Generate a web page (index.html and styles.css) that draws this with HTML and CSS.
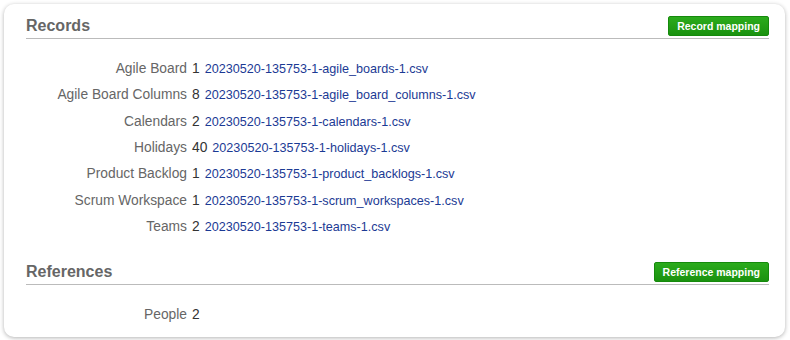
FILE: index.html
```html
<!DOCTYPE html>
<html lang="en">
<head>
  <meta charset="UTF-8">
  <meta name="viewport" content="width=device-width, initial-scale=1.0">
  <title>Import summary</title>
  <link rel="stylesheet" href="styles.css">
</head>
<body>
  <div class="card">
    <div class="section-header">
      <h2>Records</h2>
      <button class="btn-green">Record mapping</button>
    </div>
    <div class="list">
      <div class="item">
        <span class="label">Agile Board</span>
        <span class="count">1</span>
        <a href="#">20230520-135753-1-agile_boards-1.csv</a>
      </div>
      <div class="item">
        <span class="label">Agile Board Columns</span>
        <span class="count">8</span>
        <a href="#">20230520-135753-1-agile_board_columns-1.csv</a>
      </div>
      <div class="item">
        <span class="label">Calendars</span>
        <span class="count">2</span>
        <a href="#">20230520-135753-1-calendars-1.csv</a>
      </div>
      <div class="item">
        <span class="label">Holidays</span>
        <span class="count">40</span>
        <a href="#">20230520-135753-1-holidays-1.csv</a>
      </div>
      <div class="item">
        <span class="label">Product Backlog</span>
        <span class="count">1</span>
        <a href="#">20230520-135753-1-product_backlogs-1.csv</a>
      </div>
      <div class="item">
        <span class="label">Scrum Workspace</span>
        <span class="count">1</span>
        <a href="#">20230520-135753-1-scrum_workspaces-1.csv</a>
      </div>
      <div class="item">
        <span class="label">Teams</span>
        <span class="count">2</span>
        <a href="#">20230520-135753-1-teams-1.csv</a>
      </div>
    </div>

    <div class="section-header references">
      <h2>References</h2>
      <button class="btn-green">Reference mapping</button>
    </div>
    <div class="list">
      <div class="item">
        <span class="label">People</span>
        <span class="count">2</span>
      </div>
    </div>
  </div>
</body>
</html>
```

FILE: styles.css
```css
body {
  margin: 0;
  padding: 4px;
  font-family: "Liberation Sans", Arial, sans-serif;
  background: #fff;
}

.card {
  width: 781px;
  box-sizing: border-box;
  padding: 12px 16px 8px 22px;
  border-radius: 10px;
  box-shadow: 0 1px 4px rgba(0, 0, 0, 0.3);
  background: #fff;
}

.section-header {
  display: flex;
  align-items: center;
  justify-content: space-between;
  padding-bottom: 2px;
  border-bottom: 1px solid #bbb;
}

.section-header h2 {
  margin: 0;
  font-size: 16px;
  line-height: 20px;
  font-weight: bold;
  color: #666;
}

.references {
  margin-top: 22px;
}

.btn-green {
  height: 20px;
  padding: 0 8px;
  border: 1px solid #158a0c;
  border-radius: 2px;
  background: linear-gradient(#2bab1c, #1a920f);
  color: #fff;
  font-family: "Liberation Sans", Arial, sans-serif;
  font-size: 10.5px;
  font-weight: bold;
  line-height: 18px;
  cursor: pointer;
}

.list {
  margin-top: 17px;
}

.item {
  display: flex;
  align-items: baseline;
  gap: 5px;
  height: 26.33px;
  line-height: 26.33px;
}

.label {
  width: 161px;
  text-align: right;
  font-size: 13.8px;
  color: #666;
}

.count {
  font-size: 13.8px;
  color: #333;
}

.item a {
  font-size: 12.6px;
  color: #1b3a94;
  text-decoration: none;
}
```
